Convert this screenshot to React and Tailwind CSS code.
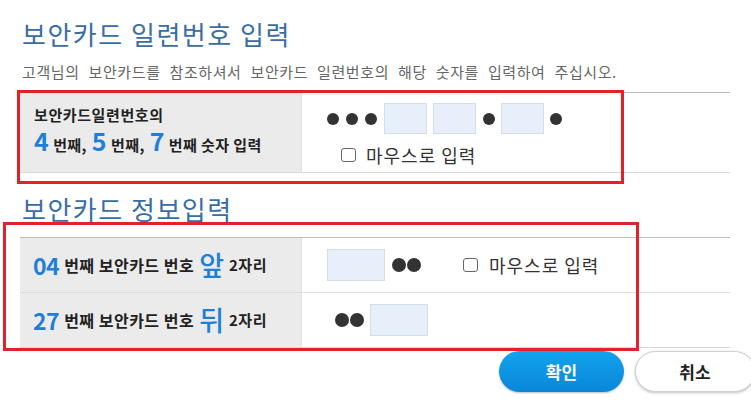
import React from "react";

const Dot = ({ s = 12 }) => (
  <span
    className={s === 12 ? "block w-[12px] h-[12px] rounded-full bg-[#333]" : "block w-[14px] h-[14px] rounded-full bg-[#333]"}
  />
);

const Box = ({ w = 43 }) => (
  <span
    className={
      w === 43
        ? "block w-[43px] h-[31px] bg-[#e7f0fa] border border-[#d3dde8]"
        : "block w-[58px] h-[32px] bg-[#e7f0fa] border border-[#d3dde8]"
    }
  />
);

const Check = () => (
  <span className="block w-[15px] h-[14px] rounded-[3px] border border-[#666] bg-white" />
);

export default function App() {
  return (
    <div className="w-[751px] h-[409px] bg-white relative overflow-hidden font-['Noto_Sans_CJK_KR',sans-serif]">
      <div className="pl-[20px] w-[730px]">
        <h1 className="pt-[19px] pl-[2px] text-[26px] leading-[30px] text-[#3a6da3] font-normal tracking-[1.5px]">
          보안카드 일련번호 입력
        </h1>
        <p className="mt-[13px] pl-[2px] text-[15px] leading-[20px] text-[#666] tracking-[0.6px] [word-spacing:5px]">
          고객님의 보안카드를 참조하셔서 보안카드 일련번호의 해당 숫자를 입력하여 주십시오.
        </p>

        {/* Table 1 */}
        <div className="mt-[10px] border-t border-[#bdbdbd] border-b border-b-[#d8d8d8] flex h-[81px]">
          <div className="w-[282px] bg-[#ebebeb] border-r border-[#e0e0e0] pl-[14px] pt-[12px] font-bold text-[#222]">
            <div className="text-[15px] leading-[20px] tracking-[0.6px]">보안카드일련번호의</div>
            <div className="text-[15px] leading-[30px] h-[30px] flex items-baseline tracking-[0.4px]">
              <span className="text-[25px] text-[#1f7fd6] mr-[4px]">4</span>
              <span>번째,</span>
              <span className="text-[25px] text-[#1f7fd6] ml-[5px] mr-[4px]">5</span>
              <span>번째,</span>
              <span className="text-[25px] text-[#1f7fd6] ml-[5px] mr-[4px]">7</span>
              <span>번째 숫자 입력</span>
            </div>
          </div>
          <div className="flex-1 pl-[25px] pt-[10px]">
            <div className="flex items-center">
              <div className="flex gap-[7px]">
                <Dot />
                <Dot />
                <Dot />
              </div>
              <span className="ml-[7px]"><Box /></span>
              <span className="ml-[6px]"><Box /></span>
              <span className="ml-[7px]"><Dot /></span>
              <span className="ml-[6px]"><Box /></span>
              <span className="ml-[6px]"><Dot /></span>
            </div>
            <div className="mt-[9px] ml-[14px] flex items-center h-[24px] text-[18px] text-[#333] tracking-[1px]">
              <Check />
              <span className="ml-[10px]">마우스로 입력</span>
            </div>
          </div>
        </div>

        <h2 className="mt-[21px] pl-[2px] text-[26px] leading-[30px] text-[#3a6da3] font-normal tracking-[1.5px]">
          보안카드 정보입력
        </h2>

        {/* Table 2 */}
        <div className="mt-[13px] border-t border-[#bdbdbd] border-b border-b-[#d8d8d8]">
          <div className="flex h-[55px] border-b border-[#dedede]">
            <div className="w-[282px] bg-[#ebebeb] border-r border-[#e0e0e0] pl-[13px] flex items-center font-bold text-[#222]">
              <span className="text-[23px] text-[#1f7fd6] tracking-[-0.5px] mr-[5px]">04</span>
              <span className="text-[16px] tracking-[0.5px]">번째 보안카드 번호</span>
              <span className="text-[27px] text-[#1f7fd6] font-medium mx-[5px]">앞</span>
              <span className="text-[15px] tracking-[0.5px]">2자리</span>
            </div>
            <div className="flex-1 pl-[25px] flex items-center">
              <Box w={58} />
              <div className="ml-[7px] flex gap-[1px]">
                <Dot s={14} />
                <Dot s={14} />
              </div>
              <span className="ml-[42px]"><Check /></span>
              <span className="ml-[11px] text-[18px] text-[#333] tracking-[1px]">마우스로 입력</span>
            </div>
          </div>
          <div className="flex h-[54px]">
            <div className="w-[282px] bg-[#ebebeb] border-r border-[#e0e0e0] pl-[13px] flex items-center font-bold text-[#222]">
              <span className="text-[23px] text-[#1f7fd6] tracking-[-0.5px] mr-[5px]">27</span>
              <span className="text-[16px] tracking-[0.5px]">번째 보안카드 번호</span>
              <span className="text-[27px] text-[#1f7fd6] font-medium mx-[5px]">뒤</span>
              <span className="text-[15px] tracking-[0.5px]">2자리</span>
            </div>
            <div className="flex-1 pl-[33px] flex items-center">
              <div className="flex gap-[1px]">
                <Dot s={14} />
                <Dot s={14} />
              </div>
              <span className="ml-[6px]"><Box w={58} /></span>
            </div>
          </div>
        </div>

        {/* Buttons */}
        <div className="mt-[3px] flex pl-[479px]">
          <button className="shrink-0 w-[125px] h-[41px] rounded-full bg-gradient-to-b from-[#12a3ee] to-[#0a86d8] text-white text-[17px] font-bold shadow-[0_1px_2px_rgba(0,0,0,0.25)]">
            확인
          </button>
          <button className="shrink-0 ml-[11px] w-[120px] h-[41px] rounded-full bg-white border border-[#d0d0d0] text-[#222] text-[17px] font-bold shadow-[0_1px_3px_rgba(0,0,0,0.25)]">
            취소
          </button>
        </div>
      </div>

      {/* red highlight boxes */}
      <div className="absolute left-[17px] top-[90px] w-[607px] h-[94px] border-[3px] border-[#e1222c] pointer-events-none" />
      <div className="absolute left-[3px] top-[222px] w-[636px] h-[129px] border-[3px] border-[#e1222c] pointer-events-none" />
    </div>
  );
}
